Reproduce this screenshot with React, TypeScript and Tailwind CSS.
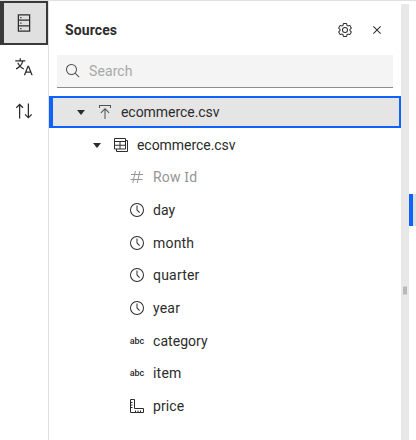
import React from "react";

type IconProps = { size?: number; className?: string; children: React.ReactNode };

function Icon({ size = 16, className = "", children }: IconProps) {
  return (
    <svg viewBox="0 0 32 32" width={size} height={size} fill="currentColor" className={"shrink-0 " + className}>
      {children}
    </svg>
  );
}

const Sources = () => (
  <Icon size={20}>
    <g fill="none" stroke="currentColor" strokeWidth="2">
      <path d="M7 3h18v26H7zM7 11.5h18M7 20.5h18" />
    </g>
    <path d="M10 6.2h2v2h-2zM10 15h2v2h-2zM10 23.8h2v2h-2z" />
  </Icon>
);

const Translate = () => (
  <Icon size={20}>
    <path d="M27.85,29H30L24,14H21.65l-6,15H17.8l1.6-4h6.85Zm-7.65-6,2.62-6.56L25.45,23ZM18,7V5H11V2H9V5H2V7H12.74a14.71,14.71,0,0,1-3.19,6.18A13.5,13.5,0,0,1,7.26,9H5.16a16.47,16.47,0,0,0,3,5.58A16.84,16.84,0,0,1,3,18l.75,1.86A18.47,18.47,0,0,0,9.53,16a16.92,16.92,0,0,0,5.76,3.84L16,18a14.48,14.48,0,0,1-5.12-3.37A17.64,17.64,0,0,0,14.8,7Z" />
  </Icon>
);

const Arrows = () => (
  <Icon size={20}>
    <path d="M27.6 20.6L24 24.2V4h-2v20.2l-3.6-3.6L17 22l6 6 6-6zM9 4l-6 6 1.4 1.4L8 7.8V28h2V7.8l3.6 3.6L15 10z" />
  </Icon>
);

const Settings = () => (
  <Icon>
    <path d="M27,16.76c0-.25,0-.5,0-.76s0-.51,0-.77l1.92-1.68A2,2,0,0,0,29.3,11L26.94,7a2,2,0,0,0-1.73-1,2,2,0,0,0-.64.1l-2.43.82a11.35,11.35,0,0,0-1.31-.75l-.51-2.52a2,2,0,0,0-2-1.61H13.64a2,2,0,0,0-2,1.61l-.51,2.52a11.48,11.48,0,0,0-1.32.75L7.43,6.06A2,2,0,0,0,6.79,6,2,2,0,0,0,5.06,7L2.7,11a2,2,0,0,0,.41,2.51L5,15.24c0,.25,0,.5,0,.76s0,.51,0,.77L3.11,18.45A2,2,0,0,0,2.7,21L5.06,25a2,2,0,0,0,1.73,1,2,2,0,0,0,.64-.1l2.43-.82a11.35,11.35,0,0,0,1.31.75l.51,2.52a2,2,0,0,0,2,1.61h4.72a2,2,0,0,0,2-1.61l.51-2.52a11.48,11.48,0,0,0,1.32-.75l2.42.82a2,2,0,0,0,.64.1,2,2,0,0,0,1.73-1L29.3,21a2,2,0,0,0-.41-2.51ZM25.21,24l-3.43-1.16a8.86,8.86,0,0,1-2.71,1.57L18.36,28H13.64l-.71-3.55a9.36,9.36,0,0,1-2.7-1.57L6.79,24,4.43,20l2.72-2.4a8.9,8.9,0,0,1,0-3.13L4.43,12,6.79,8l3.43,1.16a8.86,8.86,0,0,1,2.71-1.57L13.64,4h4.72l.71,3.55a9.36,9.36,0,0,1,2.7,1.57L25.21,8,27.57,12l-2.72,2.4a8.9,8.9,0,0,1,0,3.13L27.57,20Z" />
    <path d="M16,22a6,6,0,1,1,6-6A5.94,5.94,0,0,1,16,22Zm0-10a3.91,3.91,0,0,0-4,4,3.91,3.91,0,0,0,4,4,3.91,3.91,0,0,0,4-4A3.91,3.91,0,0,0,16,12Z" />
  </Icon>
);

const Close = () => (
  <Icon>
    <path d="M17.4141 16 24 9.4141 22.5859 8 16 14.5859 9.4143 8 8 9.4141 14.5859 16 8 22.5859 9.4143 24 16 17.4141 22.5859 24 24 22.5859z" />
  </Icon>
);

const Search = () => (
  <Icon className="text-[#525252]">
    <path d="M29,27.5859l-7.5521-7.5521a11.0177,11.0177,0,1,0-1.4141,1.4141L27.5859,29ZM4,13a9,9,0,1,1,9,9A9.01,9.01,0,0,1,4,13Z" />
  </Icon>
);

const Caret = () => (
  <Icon>
    <path d="M24 12 16 22 8 12z" />
  </Icon>
);

const Upload = () => (
  <Icon className="text-[#525252]">
    <path d="M4 8V2h24v6h-2V4H6v4zM15 30V11.8l-6.6 6.6L7 17l9-9 9 9-1.4 1.4-6.6-6.6V30z" />
  </Icon>
);

const Table = () => (
  <Icon>
    <g fill="none" stroke="currentColor" strokeWidth="2">
      <path d="M3 3h22v21H3zM3 9h22M3 16.5h22M14 9v15M25 7h4v22H7v-5" />
    </g>
  </Icon>
);

const Hash = () => (
  <Icon>
    <path d="M28 12v-2h-6.5l1.3-6h-2l-1.3 6h-7l1.3-6h-2l-1.3 6H4v2h6.1l-1.8 8H3v2h4.9l-1.4 6h2l1.4-6h7l-1.4 6h2l1.4-6H27v-2h-7.6l1.7-8zm-10.6 8h-7l1.7-8h7z" />
  </Icon>
);

const Clock = () => (
  <Icon>
    <path d="M16 30a14 14 0 1 1 14-14 14 14 0 0 1-14 14zm0-26a12 12 0 1 0 12 12A12 12 0 0 0 16 4z" />
    <path d="M20.59 22 15 16.41V7h2v8.58l5 5.01z" />
  </Icon>
);

const Ruler = () => (
  <Icon>
    <g fill="none" stroke="currentColor" strokeWidth="2">
      <path d="M3 3h8v18h18v8H3zM3 9h4M3 14h4M3 19h4M13 29v-4M18 29v-4M23 29v-4" />
    </g>
  </Icon>
);

const Abc = () => (
  <span className="flex h-4 w-4 shrink-0 items-center justify-center font-['Roboto',sans-serif] text-[9px] leading-4 font-medium tracking-[-0.1px]">
    abc
  </span>
);

type Field = { name: React.ReactNode; icon: React.ReactNode; style: string };

const fields: Field[] = [
  {
    name: (
      <>
        Row <span className="font-['Noto_Sans',sans-serif] leading-none">I</span>d
      </>
    ),
    icon: <Hash />,
    style: "text-[#959595] tracking-[0.15px]",
  },
  { name: "day", icon: <Clock />, style: "tracking-[0.1px]" },
  { name: "month", icon: <Clock />, style: "tracking-[0.2px]" },
  { name: "quarter", icon: <Clock />, style: "tracking-[0.2px]" },
  { name: "year", icon: <Clock />, style: "tracking-[0.2px]" },
  { name: "category", icon: <Abc />, style: "tracking-[0.05px]" },
  { name: "item", icon: <Abc />, style: "tracking-[0.2px]" },
  { name: "price", icon: <Ruler />, style: "tracking-[0.1px]" },
];

export default function App() {
  return (
    <div className="flex h-[440px] w-[416px] overflow-hidden border-t border-[#e0e0e0] bg-white font-['Roboto',sans-serif] text-sm text-[#2c2c2c]">
      <nav className="flex w-[49px] shrink-0 flex-col border-r border-[#e0e0e0]">
        <button className="flex h-11 w-12 items-center justify-center border-2 border-l-4 border-[#393939] bg-[#e0e0e0] pr-0.5">
          <Sources />
        </button>
        <button className="flex h-11 w-12 items-center justify-center">
          <Translate />
        </button>
        <button className="flex h-11 w-12 items-center justify-center">
          <Arrows />
        </button>
      </nav>

      <main className="flex w-[352px] shrink-0 flex-col">
        <header className="flex h-[54px] items-center pt-[3px] pr-4 pl-4">
          <h1 className="flex-1 font-bold tracking-[0.1px]">Sources</h1>
          <div className="flex gap-4">
            <Settings />
            <Close />
          </div>
        </header>
        <div className="mx-2 flex h-[33px] items-center gap-2 border-b border-[#8d8d8d] bg-[#f4f4f4] pl-2">
          <Search />
          <span className="tracking-[0.1px] text-[#a8a8a8]">Search</span>
        </div>

        <div className="mt-2 flex h-8 items-center border-2 border-l-4 border-[#0f62fe] bg-[#e5e5e5] pl-5">
          <Caret />
          <span className="ml-2 flex"><Upload /></span>
          <span className="ml-2 tracking-[-0.05px]">ecommerce.csv</span>
        </div>
        <div className="flex h-[33px] items-center pl-10">
          <Caret />
          <span className="ml-2 flex"><Table /></span>
          <span className="ml-2 tracking-[-0.05px]">ecommerce.csv</span>
        </div>
        <ul>
          {fields.map((field, i) => (
            <li key={i} className={"flex h-[32.67px] items-center gap-2 pl-20 " + field.style}>
              {field.icon}
              <span>{field.name}</span>
            </li>
          ))}
        </ul>
      </main>

      <div className="mt-[3px] flex w-2 shrink-0 flex-col items-center bg-[#e8e8e8]">
        <div className="mt-[282px] h-[9px] w-1 border-y border-[#d0d0d0] bg-[#b8b8b8]" />
      </div>
      <div className="mt-[193px] flex h-8 flex-1 border-l-4 border-[#0f62fe] bg-[#e0e0e0]" />
    </div>
  );
}
